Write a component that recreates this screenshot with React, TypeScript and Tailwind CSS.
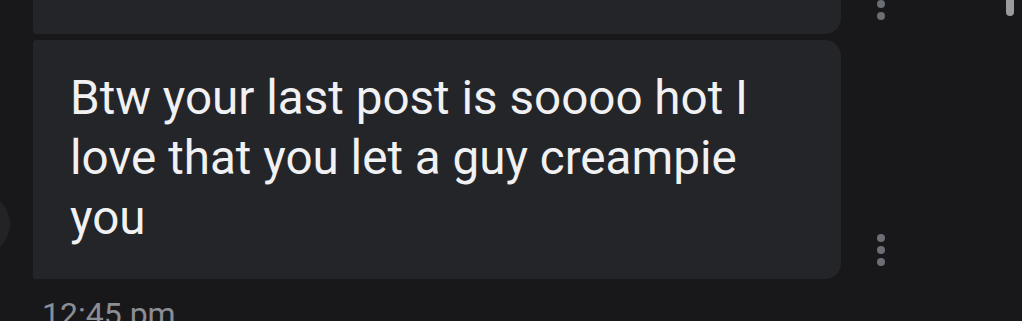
function Dots({ count }: { count: number }) {
  return (
    <div className="flex flex-col gap-[4px]">
      {Array.from({ length: count }).map((_, i) => (
        <span key={i} className="block h-[8px] w-[8px] rounded-full bg-[#6b6e74]" />
      ))}
    </div>
  )
}

export default function App() {
  return (
    <div
      className="relative h-[321px] w-[1022px] overflow-hidden bg-[#18181b]"
      style={{ fontFamily: 'Roboto, "Noto Sans", sans-serif' }}
    >
      {/* avatar peeking in from the left edge */}
      <div className="absolute left-[-52px] top-[193px] h-[62px] w-[62px] rounded-full bg-[#232326]" />
      {/* scrollbar thumb */}
      <div className="absolute right-[8px] top-[-10px] h-[26px] w-[8px] rounded-full bg-[#9b9b9d]" />

      <div className="flex flex-col pl-[33px]">
        <div className="flex items-start">
          <div className="h-[34px] w-[808px] rounded-bl-[3px] rounded-br-2xl bg-[#242529]" />
          <div className="ml-[36px]">
            <Dots count={2} />
          </div>
        </div>

        <div className="mt-[6px] flex items-end">
          <div className="w-[808px] rounded-l-[3px] rounded-r-2xl bg-[#242529] pb-[31px] pl-[37px] pr-[40px] pt-[28px]">
            <p className="text-[47.6px] leading-[60px] text-[#f1f1f3]">
              Btw your last post is soooo hot I love that you let a guy creampie you
            </p>
          </div>
          <div className="mb-[13px] ml-[36px]">
            <Dots count={3} />
          </div>
        </div>

        <p className="mt-[16px] pl-[9px] text-[32px] leading-[38px] text-[#8b8e94]">12:45 pm</p>
      </div>
    </div>
  )
}
